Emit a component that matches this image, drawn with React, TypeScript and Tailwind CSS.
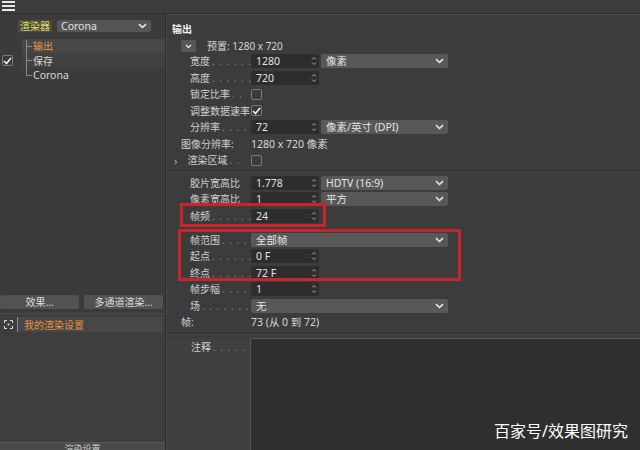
import React from "react";

const FONT = "font-['Noto_Sans','Noto_Sans_CJK_SC',sans-serif]";

// dot leaders sized to the room left after the label
function Dots({ label, room = 54 }: { label: string; room?: number }) {
  const count = Math.max(0, Math.floor((room - label.length * 10) / 5.5));
  return (
    <span className="ml-[2px] whitespace-nowrap text-[#8a8a8a] tracking-[1px]">
      {". ".repeat(count).trim()}
    </span>
  );
}

function Spinner() {
  return (
    <svg width="6" height="10" viewBox="0 0 6 10" className="shrink-0">
      <path d="M1 3.5 L3 1.5 L5 3.5" stroke="#a8a8a8" strokeWidth="1" fill="none" />
      <path d="M1 6.5 L3 8.5 L5 6.5" stroke="#a8a8a8" strokeWidth="1" fill="none" />
    </svg>
  );
}

function Chevron() {
  return (
    <svg width="9" height="6" viewBox="0 0 9 6" className="shrink-0">
      <path d="M1 1.2 L4.5 4.5 L8 1.2" stroke="#e8e8e8" strokeWidth="1.6" fill="none" />
    </svg>
  );
}

function NumInput({ value }: { value: string }) {
  return (
    <div className="flex h-[14px] w-[68px] items-center justify-between rounded-[2px] bg-[#2d2d2d] pl-[5px] pr-[2px] text-[10.5px] text-[#e2e2e2]">
      <span>{value}</span>
      <Spinner />
    </div>
  );
}

function Select({ value, wide }: { value: string; wide?: boolean }) {
  return (
    <div
      className={`flex h-[14px] items-center justify-between rounded-[2px] bg-[#585858] pl-[5px] pr-[4px] text-[10.5px] text-[#e6e6e6] ${
        wide ? "w-[197px]" : "w-[127px] ml-[2px]"
      }`}
    >
      <span>{value}</span>
      <Chevron />
    </div>
  );
}

function Check({ on }: { on?: boolean }) {
  return (
    <div className="flex h-[11px] w-[11px] items-center justify-center rounded-[2px] border border-[#7a7a7a] bg-[#3a3a3a]">
      {on && (
        <svg width="9" height="8" viewBox="0 0 9 8">
          <path d="M1 4 L3.5 6.5 L8 1" stroke="#f0f0f0" strokeWidth="1.6" fill="none" />
        </svg>
      )}
    </div>
  );
}

function Row({
  label,
  children,
  indent = true,
  dots = true,
  chevron,
}: {
  label: string;
  children?: React.ReactNode;
  indent?: boolean;
  dots?: boolean;
  chevron?: boolean;
}) {
  return (
    <div className="flex h-[16.5px] items-center">
      <div className={`flex w-[84px] items-center pr-[3px] ${indent ? "pl-[23px]" : "pl-[14px]"}`}>
        {chevron && <span className="-ml-[16px] mr-[10px] text-[11px] text-[#aaa]">›</span>}
        <span className="whitespace-nowrap text-[#d0d0d0]">{label}</span>
        {dots && <Dots label={label} />}
      </div>
      <div className="flex items-center">{children}</div>
    </div>
  );
}

function Button({ label, w }: { label: string; w: string }) {
  return (
    <div className={`flex h-[14px] items-center justify-center rounded-[2px] bg-[#525252] text-[#dcdcdc] ${w}`}>
      {label}
    </div>
  );
}

export default function App() {
  return (
    <div className={`relative flex h-[450px] w-[640px] flex-col overflow-hidden bg-[#3c3c3c] text-[10px] leading-none ${FONT}`}>
      {/* top bar */}
      <div className="flex h-[14px] shrink-0 items-start border-b border-[#2e2e2e] pl-[2px] pt-[1px]">
        <div className="flex w-[13px] flex-col gap-[2px]">
          <div className="h-[2px] bg-[#e8e8e8]" />
          <div className="h-[2px] bg-[#e8e8e8]" />
          <div className="h-[2px] bg-[#e8e8e8]" />
        </div>
      </div>

      <div className="flex flex-1">
        {/* left panel */}
        <div className="flex w-[166px] shrink-0 flex-col border-r border-[#2c2c2c] bg-[#3b3b3b]">
          <div className="mt-[6px] flex items-center pl-[18px]">
            <div className="flex h-[12px] items-center bg-[#4d4d33] px-[2px] text-[#dcd479]">渲染器</div>
            <div className="ml-[5px] flex h-[12px] w-[94px] items-center justify-between rounded-[2px] bg-[#555] pl-[4px] pr-[4px] text-[10.5px] text-[#e2e2e2]">
              <span>Corona</span>
              <Chevron />
            </div>
          </div>

          <div className="relative mt-[7px] flex flex-col">
            <div className="flex h-[14px] items-center">
              <div className="w-[22px]" />
              <div className="flex h-full flex-1 items-center bg-[#474747] pl-[11px] text-[#e9994a]">输出</div>
            </div>
            <div className="flex h-[15px] items-center">
              <div className="flex w-[22px] items-center pl-[2px]">
                <Check on />
              </div>
              <div className="flex h-full flex-1 items-center bg-[#414141] pl-[11px] text-[#d6d6d6]">保存</div>
            </div>
            <div className="flex h-[15px] items-center">
              <div className="w-[22px]" />
              <div className="pl-[11px] text-[10.5px] text-[#d6d6d6]">Corona</div>
            </div>
            {/* tree lines */}
            <div className="absolute left-[26px] top-[1px] h-[36px] w-px bg-[#8a8a8a]" />
            <div className="absolute left-[26px] top-[7px] h-px w-[6px] bg-[#8a8a8a]" />
            <div className="absolute left-[26px] top-[21px] h-px w-[6px] bg-[#8a8a8a]" />
            <div className="absolute left-[26px] top-[36px] h-px w-[6px] bg-[#8a8a8a]" />
          </div>

          <div className="flex-1" />

          <div className="flex justify-between pr-[2px]">
            <Button label="效果..." w="w-[79px]" />
            <Button label="多通道渲染..." w="w-[79px]" />
          </div>

          <div className="mt-[4px] flex h-[129px] flex-col border-t border-[#4a4a4a] bg-[#3e3e3e] pt-[3px]">
            <div className="flex h-[15px] items-center">
              <div className="flex w-[17px] items-center justify-center">
                <svg width="9" height="9" viewBox="0 0 9 9">
                  <path d="M0.5 3 V0.5 H3 M6 0.5 H8.5 V3 M8.5 6 V8.5 H6 M3 8.5 H0.5 V6" stroke="#d8d8d8" fill="none" />
                  <circle cx="4.5" cy="4.5" r="1" fill="#d8d8d8" />
                </svg>
              </div>
              <div className="flex h-full w-[146px] items-center border-l border-[#8a8a8a] bg-[#474747] pl-[6px] text-[#ea9040]">
                我的渲染设置
              </div>
            </div>
          </div>
          <div className="flex h-[8px] items-start justify-center overflow-hidden border-t border-[#5a5a5a] bg-[#4a4a4a] pt-[1px] text-[9px] text-[#cfcfcf]">
            渲染设置
          </div>
        </div>

        {/* right panel */}
        <div className="flex flex-1 flex-col border-l border-[#4a4a4a] border-t border-t-[#4a4a4a]">
          <div className="pl-[5px] pt-[9px] font-bold text-[#f0f0f0]">输出</div>
          <div className="mt-[6px] flex items-center pl-[14px]">
            <div className="flex h-[12px] w-[15px] items-center justify-center rounded-[2px] bg-[#575757]">
              <svg width="7" height="5" viewBox="0 0 7 5">
                <path d="M1 1 L3.5 3.5 L6 1" stroke="#e6e6e6" strokeWidth="1.3" fill="none" />
              </svg>
            </div>
            <span className="ml-[11px] text-[#d6d6d6]">预置: 1280 x 720</span>
          </div>

          <div className="mt-[1px] flex flex-col">
            <Row label="宽度">
              <NumInput value="1280" />
              <Select value="像素" />
            </Row>
            <Row label="高度">
              <NumInput value="720" />
            </Row>
            <Row label="锁定比率">
              <Check />
            </Row>
            <Row label="调整数据速率" dots={false}>
              <Check on />
            </Row>
            <Row label="分辨率">
              <NumInput value="72" />
              <Select value="像素/英寸 (DPI)" />
            </Row>
            <Row label="图像分辨率:" indent={false} dots={false}>
              <span className="text-[10.5px] text-[#d8d8d8]">1280 x 720 像素</span>
            </Row>
            <Row label="渲染区域" chevron>
              <Check />
            </Row>
          </div>

          <div className="mt-[1px] h-px bg-[#2e2e2e]" />
          <div className="h-px bg-[#474747]" />

          <div className="mt-[3px] flex flex-col">
            <Row label="胶片宽高比">
              <NumInput value="1.778" />
              <Select value="HDTV (16:9)" />
            </Row>
            <Row label="像素宽高比">
              <NumInput value="1" />
              <Select value="平方" />
            </Row>
            <Row label="帧频">
              <NumInput value="24" />
            </Row>
          </div>

          <div className="mt-[7.5px] flex flex-col">
            <Row label="帧范围">
              <Select value="全部帧" wide />
            </Row>
            <Row label="起点">
              <NumInput value="0 F" />
            </Row>
            <Row label="终点">
              <NumInput value="72 F" />
            </Row>
            <Row label="帧步幅">
              <NumInput value="1" />
            </Row>
            <Row label="场">
              <Select value="无" wide />
            </Row>
            <Row label="帧:" indent={false} dots={false}>
              <span className="text-[10.5px] text-[#d8d8d8]">73 (从 0 到 72)</span>
            </Row>
          </div>

          <div className="mt-[2px] h-px bg-[#2e2e2e]" />
          <div className="h-px bg-[#474747]" />

          <div className="mt-[3px] flex flex-1">
            <div className="flex w-[83px] shrink-0 items-start bg-[#404040] pl-[24px] pt-[4px]">
              <span className="shrink-0 whitespace-nowrap text-[#d0d0d0]">注释</span>
              <Dots label="注释" room={52} />
            </div>
            <div className="flex-1 border-l border-t border-[#555] bg-[#2f2f2f]" />
          </div>
        </div>
      </div>

      {/* red annotation boxes */}
      <div className="pointer-events-none absolute left-[180px] top-[203px] h-[24px] w-[146px] border-[3px] border-[#c9232c]" />
      <div className="pointer-events-none absolute left-[178px] top-[229px] h-[52px] w-[283px] border-[3px] border-[#c9232c]" />

      {/* watermark */}
      <div className="pointer-events-none absolute left-[494px] top-[423px] text-[16px] text-white">
        百家号/效果图研究
      </div>
    </div>
  );
}
